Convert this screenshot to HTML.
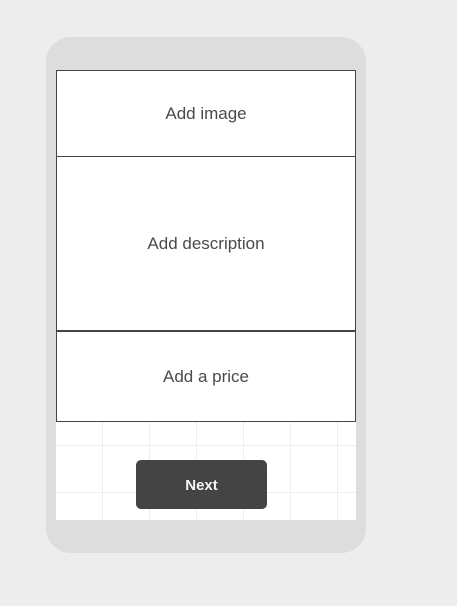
<!DOCTYPE html><html><head><style>
body{margin:0;width:457px;height:606px;background:#ededed;position:relative;font-family:"Liberation Sans",sans-serif;overflow:hidden}
.phone{position:absolute;left:46px;top:37px;width:320px;height:516px;background:#dddddd;border-radius:25px}
.screen{position:absolute;left:56px;top:70px;width:300px;height:450px;background-color:#fff;background-image:linear-gradient(#eeeeee 1px,transparent 1px),linear-gradient(90deg,#eeeeee 1px,transparent 1px);background-size:47px 47px;background-position:0 -1px,-1px 0}
.box{position:absolute;left:56px;width:298px;border:1px solid #444;background:#fff;color:#4a4a4a;font-size:17px;display:flex;align-items:center;justify-content:center}
.btn{position:absolute;left:136px;top:460px;width:131px;height:49px;background:#444;border-radius:5px;color:#f4f4f4;font-size:15px;font-weight:bold;display:flex;align-items:center;justify-content:center;padding-top:1px;box-sizing:border-box}
</style></head><body>
<div class="phone"></div>
<div class="screen"></div>
<div class="box" style="top:70px;height:85px">Add image</div>
<div class="box" style="top:156px;height:173px">Add description</div>
<div class="box" style="top:331px;height:89px">Add a price</div>
<div class="btn">Next</div>
</body></html>
